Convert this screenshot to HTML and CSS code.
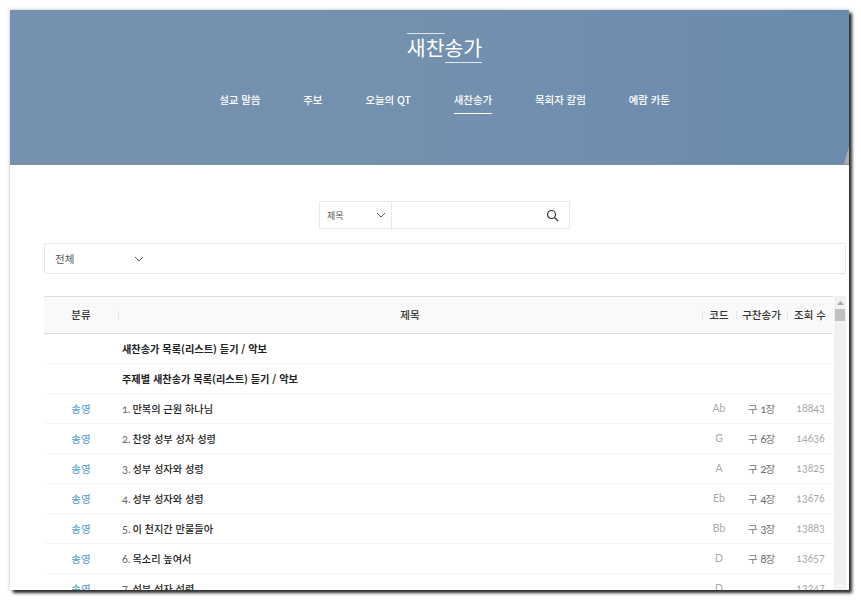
FILE: index.html
```html
<!DOCTYPE html>
<html lang="ko">
<head>
<meta charset="utf-8">
<title>새찬송가</title>
<link rel="stylesheet" href="styles.css">
</head>
<body>
<div class="window">
  <header class="banner">
    <h1 class="title"><span class="title-text">새찬송가</span></h1>
    <nav class="nav">
      <a class="nav-item">설교 말씀</a>
      <a class="nav-item">주보</a>
      <a class="nav-item">오늘의 QT</a>
      <a class="nav-item active">새찬송가</a>
      <a class="nav-item">목회자 칼럼</a>
      <a class="nav-item">예람 카툰</a>
    </nav>
    <svg class="corner" width="5" height="16" viewBox="0 0 5 16"><path d="M0 16 L4.5 0 L5 0 L5 16Z" fill="#a3aeb9"/></svg>
  </header>
  <main class="content">
    <div class="search-row">
      <div class="search">
        <div class="search-select">
          <span>제목</span>
          <svg class="chev" width="10" height="6" viewBox="0 0 10 6"><path d="M1 1 L5 5 L9 1" fill="none" stroke="#555" stroke-width="1"/></svg>
        </div>
        <div class="search-input">
          <svg width="13" height="13" viewBox="0 0 13 13"><circle cx="5.5" cy="5.5" r="4" fill="none" stroke="#333" stroke-width="1.2"/><path d="M8.5 8.5 L12 12" stroke="#333" stroke-width="1.3"/></svg>
        </div>
      </div>
    </div>
    <div class="filter">
      <span class="filter-label">전체</span>
      <svg width="10" height="6" viewBox="0 0 10 6"><path d="M1 1 L5 5 L9 1" fill="none" stroke="#555" stroke-width="1"/></svg>
    </div>
    <div class="list-wrap">
      <div class="list">
        <div class="row head">
          <div class="c-cat">분류</div>
          <div class="c-title">제목</div>
          <div class="c-code">코드</div>
          <div class="c-old">구찬송가</div>
          <div class="c-views">조회 수</div>
        </div>
        <div class="row"><div class="c-cat"></div><div class="c-title strong">새찬송가 목록(리스트) 듣기 / 악보</div><div class="c-code"></div><div class="c-old"></div><div class="c-views"></div></div>
        <div class="row"><div class="c-cat"></div><div class="c-title strong">주제별 새찬송가 목록(리스트) 듣기 / 악보</div><div class="c-code"></div><div class="c-old"></div><div class="c-views"></div></div>
        <div class="row"><div class="c-cat">송영</div><div class="c-title"><span class="num">1.</span> 만복의 근원 하나님</div><div class="c-code">Ab</div><div class="c-old">구 <span class="num">1</span>장</div><div class="c-views">18843</div></div>
        <div class="row"><div class="c-cat">송영</div><div class="c-title"><span class="num">2.</span> 찬양 성부 성자 성령</div><div class="c-code">G</div><div class="c-old">구 <span class="num">6</span>장</div><div class="c-views">14636</div></div>
        <div class="row"><div class="c-cat">송영</div><div class="c-title"><span class="num">3.</span> 성부 성자와 성령</div><div class="c-code">A</div><div class="c-old">구 <span class="num">2</span>장</div><div class="c-views">13825</div></div>
        <div class="row"><div class="c-cat">송영</div><div class="c-title"><span class="num">4.</span> 성부 성자와 성령</div><div class="c-code">Eb</div><div class="c-old">구 <span class="num">4</span>장</div><div class="c-views">13676</div></div>
        <div class="row"><div class="c-cat">송영</div><div class="c-title"><span class="num">5.</span> 이 천지간 만물들아</div><div class="c-code">Bb</div><div class="c-old">구 <span class="num">3</span>장</div><div class="c-views">13883</div></div>
        <div class="row"><div class="c-cat">송영</div><div class="c-title"><span class="num">6.</span> 목소리 높여서</div><div class="c-code">D</div><div class="c-old">구 <span class="num">8</span>장</div><div class="c-views">13657</div></div>
        <div class="row"><div class="c-cat">송영</div><div class="c-title"><span class="num">7.</span> 성부 성자 성령</div><div class="c-code">D</div><div class="c-old"></div><div class="c-views">13247</div></div>
      </div>
      <div class="scrollbar">
        <svg class="scroll-up" width="7" height="4" viewBox="0 0 7 4"><path d="M3.5 0 L7 4 L0 4Z" fill="#a8a8a8"/></svg>
        <div class="scroll-thumb"></div>
      </div>
    </div>
  </main>
</div>
</body>
</html>
```

FILE: styles.css
```css
* { box-sizing: border-box; }
html, body { margin: 0; height: 600px; overflow: hidden; background: #fff; }
body {
  padding: 10px 12px 10px 10px;
  font-family: "Noto Sans CJK KR", "Noto Sans", sans-serif;
  color: #222;
}
.window {
  height: 580px;
  overflow: hidden;
  background: #fff;
  box-shadow: 3px 3px 3px #2b2b2b, 0 0 4px rgba(0,0,0,.25);
}
.banner {
  position: relative;
  height: 155px;
  padding: 23px 0 0 30px;
  background: linear-gradient(90deg, #7792b0 0%, #7390af 50%, #6b8bad 100%);
  border-bottom: 1px solid #7f91a5;
  color: #fff;
}
.title {
  display: flex;
  justify-content: center;
  margin: 0;
  font-size: 20.5px;
  font-weight: 400;
  line-height: 28px;
}
.title-text {
  height: 30px;
  background:
    linear-gradient(#dfe6ee, #dfe6ee) left top / 50% 1px no-repeat,
    linear-gradient(#dfe6ee, #dfe6ee) right bottom / 50% 1px no-repeat;
}
.nav {
  display: flex;
  justify-content: center;
  gap: 43px;
  margin-top: 27px;
}
.nav-item {
  height: 24px;
  font-size: 10.5px;
  font-weight: 500;
  line-height: 20px;
  color: #fff;
  letter-spacing: -0.1px;
}
.nav-item.active { border-bottom: 1px solid #fff; }
.corner { position: absolute; right: 0; bottom: 0; }
.content { padding: 36px 3px 0 34px; }
.search-row { display: flex; justify-content: center; }
.search {
  display: flex;
  width: 251px;
  height: 28px;
  border: 1px solid #e6e6e6;
  border-radius: 2px;
  margin-right: 1px;
}
.search-select {
  display: flex;
  align-items: center;
  justify-content: space-between;
  width: 72px;
  padding: 0 5px 0 7px;
  border-right: 1px solid #e6e6e6;
  font-size: 9px;
  color: #555;
}
.search-input {
  flex: 1;
  display: flex;
  align-items: center;
  justify-content: flex-end;
  padding-right: 10px;
}
.filter {
  display: flex;
  align-items: center;
  height: 31px;
  margin-top: 14px;
  padding-left: 10px;
  border: 1px solid #e8e8e8;
  border-radius: 2px;
  font-size: 10.5px;
  color: #555;
}
.filter-label { width: 79px; }
.list-wrap {
  display: flex;
  margin-top: 22px;
  gap: 1px;
}
.list { flex: 1; min-width: 0; }
.row {
  display: grid;
  grid-template-columns: 74px 1fr 34px 51px 46px;
  height: 30px;
  align-items: center;
  border-bottom: 1px solid #f5f5f5;
  font-size: 10.5px;
  color: #999;
  text-align: center;
}
.row > div { white-space: nowrap; line-height: 29px; }
.row > .c-cat { line-height: 28px; }
.head {
  height: 38px;
  background: #f9f9f9;
  border-top: 1px solid #dedede;
  border-bottom: 1px solid #dcdcdc;
  color: #333;
  font-weight: 500;
}
.head > div, .row.head > .c-cat {
  position: relative;
  color: #333;
  line-height: 36px;
}
.head > div + div::before {
  content: "";
  position: absolute;
  left: 0;
  top: 14px;
  height: 8px;
  border-left: 1px solid #e5e5e5;
}
.c-cat { color: #4d9bd1; }
.c-title {
  text-align: left;
  padding-left: 4px;
  color: #222;
  font-size: 10.2px;
  font-weight: 500;
}
.head .c-title { text-align: center; padding-left: 0; font-size: 10.5px; }
.strong { font-weight: 700; }
.num {
  font-family: "Lato", sans-serif;
  font-variant-numeric: oldstyle-nums;
  font-size: 11px;
  font-weight: 400;
  color: #666;
  margin-right: -1px;
}
.c-code, .c-views {
  font-family: "Lato", sans-serif;
  font-variant-numeric: oldstyle-nums;
  font-weight: 400;
  color: #a8a8a8;
}
.c-views { padding-left: 1px; }
.head .c-views { padding-left: 0; }
.head .c-code, .head .c-views {
  font-family: "Noto Sans CJK KR", sans-serif;
  font-weight: 500;
  color: #333;
}
.c-old { color: #777; }
.scrollbar {
  width: 12px;
  height: 300px;
  background: #f1f1f1;
  padding: 5px 1px 0;
}
.scroll-up { display: block; margin: 0 auto; }
.scroll-thumb {
  width: 10px;
  height: 12px;
  margin-top: 4px;
  background: #c1c1c1;
}
```
